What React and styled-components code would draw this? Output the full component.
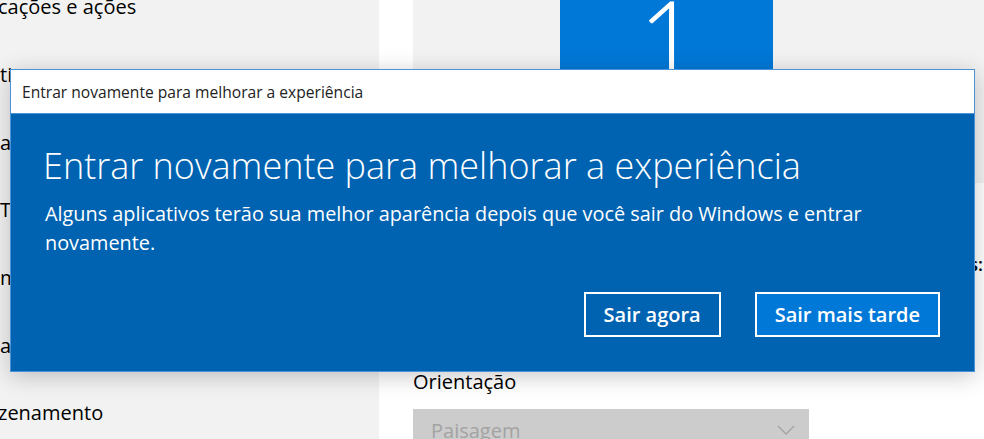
import styled, { createGlobalStyle } from 'styled-components';

const GlobalStyle = createGlobalStyle`
	html, body {
		margin: 0;
		padding: 0;
	}
	body {
		width: 984px;
		height: 439px;
		overflow: hidden;
		background: #fff;
		font-family: "Open Sans", "Noto Sans", sans-serif;
		color: #000;
	}
`;

const Page = styled.div`
	position: relative;
	display: flex;
	width: 984px;
	height: 439px;
	overflow: hidden;
`;

const Sidebar = styled.nav`
	width: 379px;
	flex-shrink: 0;
	background: #f2f2f2;
	display: flex;
	flex-direction: column;
	margin-top: -27px;
`;

const NavItem = styled.div`
	flex-shrink: 0;
	height: 67.7px;
	display: flex;
	align-items: center;
	font-size: 20px;
	white-space: nowrap;
	text-indent: ${(p) => p.$cut || 0}px;
`;

const Main = styled.main`
	flex: 1;
	min-width: 0;
	display: flex;
	flex-direction: column;
	padding-left: 34px;
`;

const Preview = styled.div`
	flex-shrink: 0;
	height: 183px;
	background: #f2f2f2;
	padding-left: 147px;
	overflow: hidden;
`;

const Monitor = styled.div`
	width: 213px;
	height: 150px;
	background: #0078d7;
	color: #fff;
	display: flex;
	justify-content: center;
	font-family: Lato, sans-serif;
	font-weight: 300;
	font-size: 104px;
	line-height: 1;
	margin-top: -16px;
	padding-left: 4px;
	box-sizing: border-box;
`;

const ScaleLabel = styled.div`
	flex-shrink: 0;
	margin-top: 68px;
	display: flex;
	justify-content: flex-end;
	overflow: hidden;
	padding-right: 1px;
	font-size: 18px;
	font-weight: 600;
	line-height: 26px;
	white-space: nowrap;
`;

const FieldLabel = styled.div`
	flex-shrink: 0;
	margin-top: 92px;
	font-size: 20px;
	line-height: 26px;
`;

const Select = styled.div`
	margin-top: 14px;
	width: 396px;
	height: 42px;
	flex-shrink: 0;
	background: #cccccc;
	color: #a3a3a3;
	display: flex;
	align-items: center;
	justify-content: space-between;
	padding: 0 14px 0 18px;
	box-sizing: border-box;
	font-size: 20px;
`;

const Dialog = styled.div`
	position: absolute;
	left: 10px;
	top: 69px;
	width: 965px;
	height: 303px;
	box-sizing: border-box;
	border: 1px solid #4b93d6;
	display: flex;
	flex-direction: column;
	box-shadow: 0 4px 22px rgba(0, 0, 0, 0.22);
`;

const TitleBar = styled.div`
	height: 43px;
	background: #fff;
	display: flex;
	align-items: center;
	padding-left: 11px;
	font-size: 15.6px;
	color: #222;
	border-bottom: 1px solid #4b93d6;
`;

const Body = styled.div`
	flex: 1;
	background: #0063b1;
	color: #fff;
	display: flex;
	flex-direction: column;
	padding: 29px 34px 34px 32px;
`;

const Heading = styled.h1`
	margin: 0;
	font-size: 36px;
	font-weight: 300;
	line-height: 46px;
`;

const Message = styled.p`
	margin: 10px 0 0 2px;
	font-size: 19.85px;
	line-height: 29px;
	max-width: 880px;
`;

const Actions = styled.div`
	margin-top: auto;
	display: flex;
	justify-content: flex-end;
	gap: 34px;
`;

const Button = styled.button`
	height: 45px;
	padding: 0 18px;
	border: 2px solid #fff;
	background: ${(p) => (p.$primary ? '#0078d7' : 'transparent')};
	color: #fff;
	font-family: inherit;
	font-size: 20px;
	font-weight: 600;
	cursor: pointer;
`;

const Chevron = () => (
	<svg width="18" height="10" viewBox="0 0 18 10">
		<path d="M1 1l8 8 8-8" fill="none" stroke="#a3a3a3" strokeWidth="1.3" />
	</svg>
);

const navItems = [
	{ label: 'cações e ações', cut: -2 },
	{ label: 'ti' },
	{ label: 'a' },
	{ label: 'T' },
	{ label: 'm' },
	{ label: 'a' },
	{ label: 'zenamento', cut: -2 },
];

export default function App() {
	return (
		<>
			<GlobalStyle />
			<Page>
				<Sidebar>
					{navItems.map((item, i) => (
						<NavItem key={i} $cut={item.cut}>
							{item.label}
						</NavItem>
					))}
				</Sidebar>
				<Main>
					<Preview>
						<Monitor>1</Monitor>
					</Preview>
					<ScaleLabel>Alterar o tamanho do texto, dos aplicativos e itens:</ScaleLabel>
					<FieldLabel>Orientação</FieldLabel>
					<Select>
						<span>Paisagem</span>
						<Chevron />
					</Select>
				</Main>
				<Dialog role="dialog">
					<TitleBar>Entrar novamente para melhorar a experiência</TitleBar>
					<Body>
						<Heading>Entrar novamente para melhorar a experiência</Heading>
						<Message>
							Alguns aplicativos terão sua melhor aparência depois que você sair do Windows e entrar
							novamente.
						</Message>
						<Actions>
							<Button>Sair agora</Button>
							<Button $primary>Sair mais tarde</Button>
						</Actions>
					</Body>
				</Dialog>
			</Page>
		</>
	);
}
